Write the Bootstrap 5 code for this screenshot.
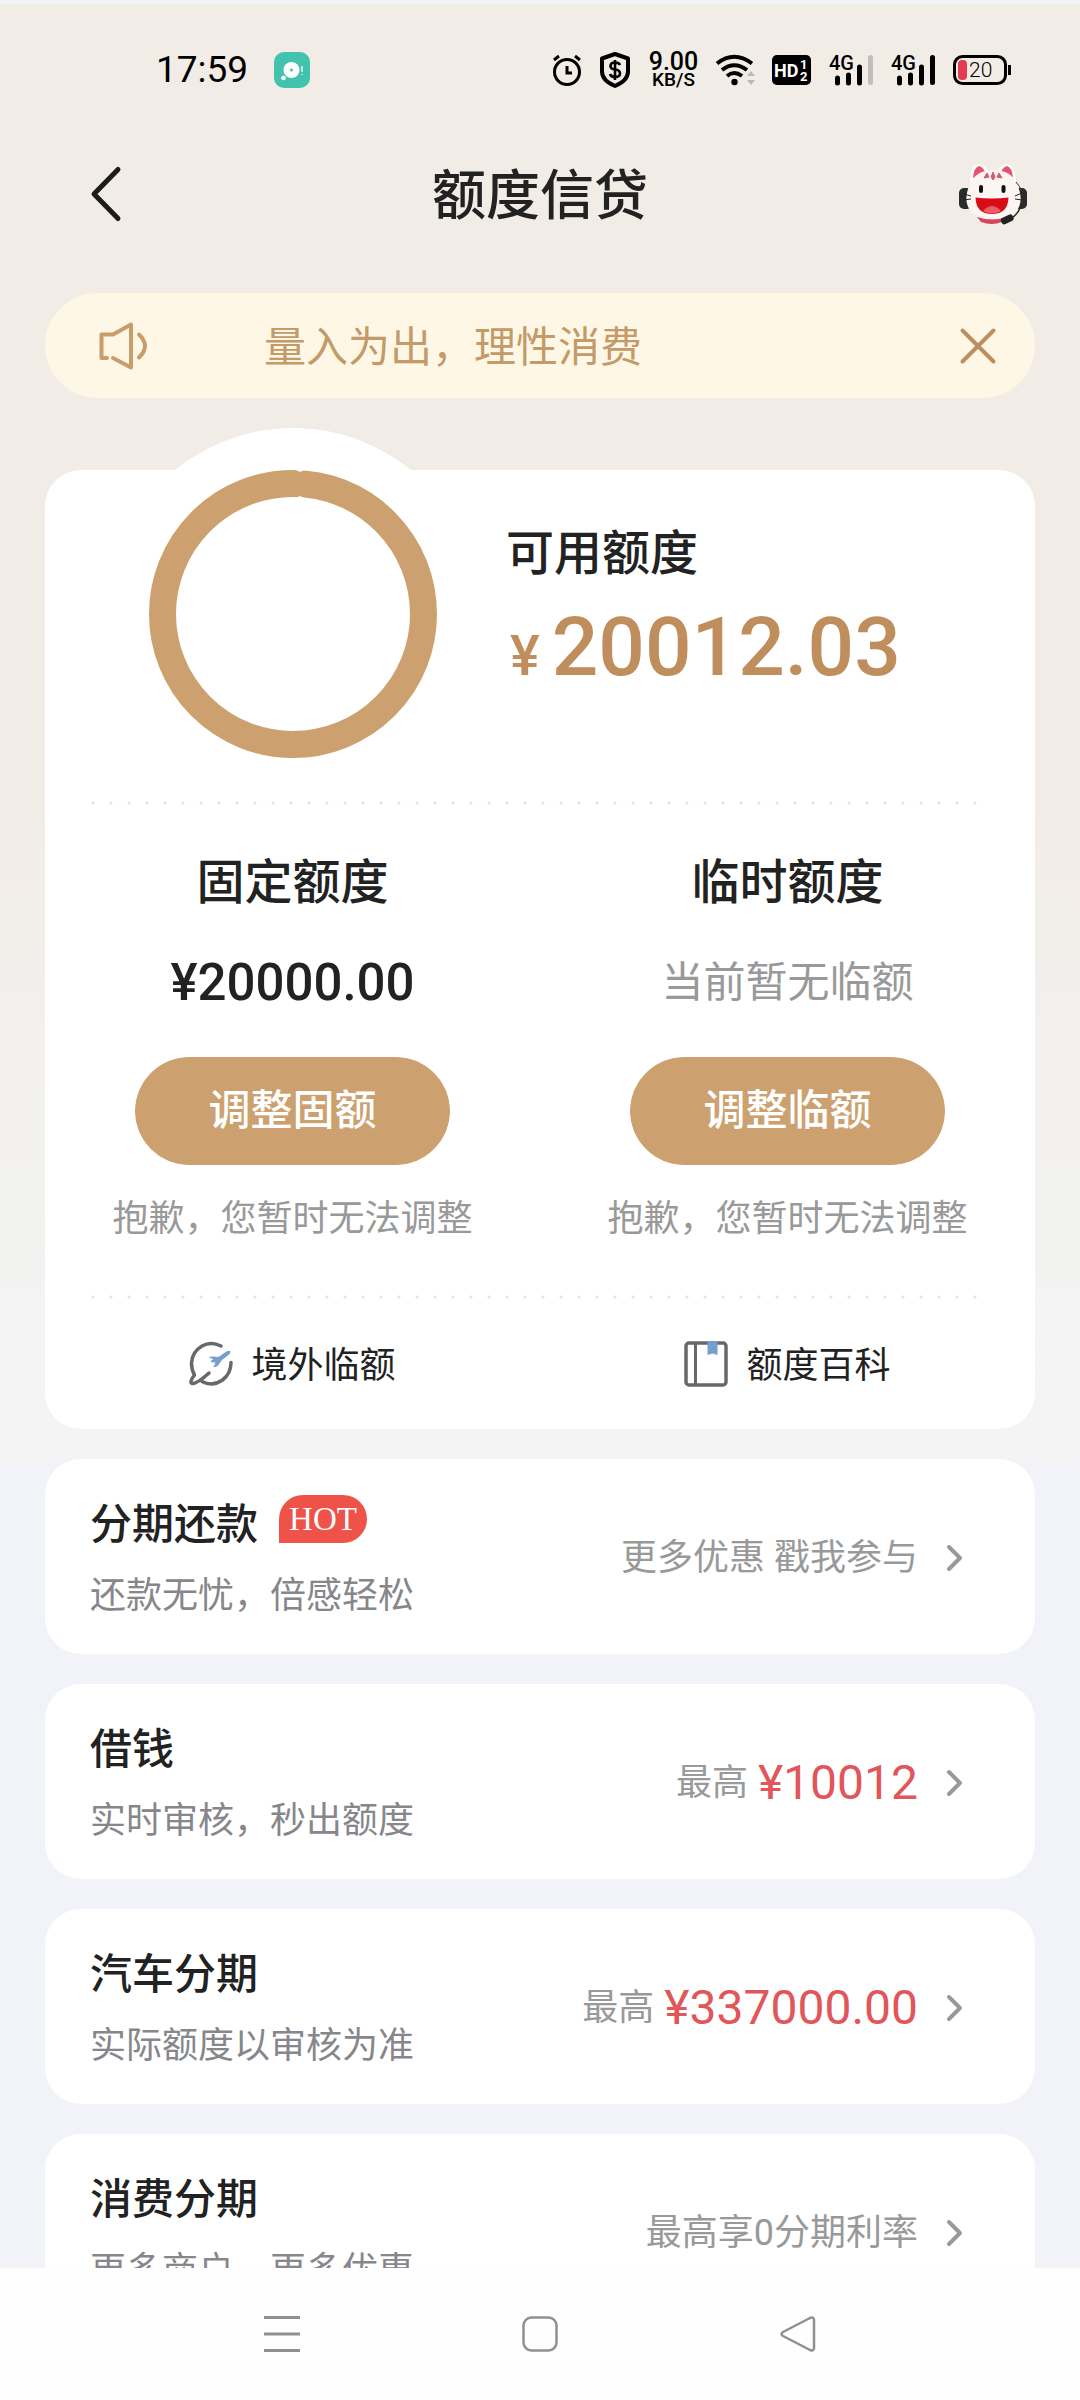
<!DOCTYPE html>
<html lang="zh-CN">
<head>
<meta charset="utf-8">
<meta name="viewport" content="width=device-width, initial-scale=1">
<title>额度信贷</title>
<link href="https://cdn.jsdelivr.net/npm/bootstrap@5.3.0/dist/css/bootstrap.min.css" rel="stylesheet">
<style>
  :root { --gold: #cca16f; --gold-text: #c39a69; --ink: #222; --muted: #999; --side: 45px; }
  body { font-family: Roboto, "Noto Sans CJK SC", sans-serif; color: var(--ink); background: #fefefe; }
  a { color: inherit; text-decoration: none; }
  svg { display: block; flex: none; overflow: visible; }

  .screen { background: linear-gradient(#f1ece6 0, #f1ece6 780px, #f3efec 1000px, #f2f2f1 1200px, #f4f4f4 1400px, #f4f4f4 1459px, #f2f3f8 1460px); }
  .status-bar { height: 136px; padding: 0 69px 0 156px; border-top: 4px solid #f3f2f7; color: #000; }
  .clock { font-size: 37px; line-height: 48px; width: 94px; }
  .status-icons { gap: 18px; }
  .net-speed { width: 49px; }
  .net-speed strong { font-size: 25px; line-height: 20px; font-weight: 500; }
  .net-speed span { font-size: 19px; line-height: 16px; font-weight: 500; }
  .hd-icon { margin-left: -3px; }

  .title-bar { height: 116px; padding: 0 53px 0 81px; }
  .title-bar h1 { font-size: 54px; line-height: 72px; font-weight: 500; padding-top: 6px; }
  .bar-start { width: 75px; }
  .bar-end { width: 103px; }

  .content { padding: 41px var(--side) 0; }
  .notice { height: 105px; padding: 0 27px 0 54px; background: #fff7e6; color: var(--gold-text); font-size: 42px; line-height: 60px; }
  .notice-text { margin-left: 117px; padding-top: 4px; }
  .btn-icon { width: 60px; height: 60px; }

  .panel { background: #fff; border-radius: 36px; }
  .limit-panel { margin-top: 72px; }
  .summary { padding: 0 0 43px 104px; }
  .ring-wrap { width: 288px; height: 288px; }
  .ring-wrap::before { content: ""; position: absolute; inset: -42px; border-radius: 50%; background: #fff; }
  .summary-text { padding-top: 54px; margin-left: 69px; }
  .heading { font-size: 48px; line-height: 60px; font-weight: 500; }
  .available { margin-top: 18px; font-size: 82px; line-height: 90px; font-weight: 500; color: #c08e5d; }
  .available small { font-size: 56px; margin: 0 12px 0 4px; }
  .dots { height: 4px; margin: 0 var(--side); background: radial-gradient(circle at 3px 2px, #e4e4e4 1px, transparent 2px) 0 0 / 18px 4px repeat-x; }

  .limits { padding: 48px 0 52px; }
  .limit-value { margin-top: 40px; line-height: 60px; font-size: 51px; font-weight: 500; }
  .limit-value.is-empty { font-size: 42px; font-weight: 400; color: var(--muted); }
  .btn-gold { --bs-btn-color: #fff; --bs-btn-bg: var(--gold); --bs-btn-border-color: var(--gold); --bs-btn-hover-color: #fff; --bs-btn-hover-bg: #c29460;
    width: 315px; height: 108px; margin-top: 44px; font-size: 42px; line-height: 60px; font-weight: 500; }
  .hint { margin-top: 30px; font-size: 36px; line-height: 48px; color: var(--muted); }
  .quick-link { height: 130px; gap: 18px; font-size: 36px; line-height: 48px; }
  .quick-link span { padding-top: 4px; }

  .product { margin-top: 30px; padding: 36px 72px 34px var(--side); }
  .product-name { gap: 21px; font-size: 42px; line-height: 60px; font-weight: 500; }
  .hot { width: 88px; height: 48px; border-radius: 24px 24px 24px 0; background: #ee5249; color: #fff; font: 33px/48px "Liberation Serif", serif; }
  .product-sub { margin-top: 17px; font-size: 36px; line-height: 48px; color: #86868b; }
  .product-side { gap: 10px; font-size: 36px; line-height: 58px; color: var(--muted); }
  .product-side svg { margin-left: 17px; }
  .price { font-size: 48px; color: #e0565a; }

  .nav-keys { height: 132px; gap: 198px; }
  .nav-keys .btn { width: 60px; height: 60px; }
</style>
</head>
<body>
<div class="d-flex flex-column vh-100">
  <div class="screen flex-grow-1 overflow-hidden">

    <div class="status-bar d-flex align-items-center justify-content-between">
      <div class="d-flex align-items-center">
        <span class="clock">17:59</span>
        <svg class="ms-4" width="36" height="36" viewBox="0 0 36 36"><rect width="36" height="36" rx="10" fill="#43c3ae"/><circle cx="17.500" cy="18" r="8" fill="#fff"/><circle cx="17.500" cy="18" r="1.500" fill="#43c3ae"/><circle cx="9.500" cy="26" r="2.300" fill="#fff"/><path d="M28 14v6M28 22v1" stroke="#b5ebe0" stroke-width="2"/></svg>
      </div>
      <div class="status-icons d-flex align-items-center">
        <svg width="28" height="32" viewBox="0 0 28 32" fill="none" stroke="#000" stroke-width="3"><circle cx="14" cy="18" r="12.500"/><path d="M14 12v7h5M1 6l5-4M27 6l-5-4"/></svg>
        <svg width="32" height="36" viewBox="0 0 32 36"><path d="M16 2l13 4.500v13q0 9-13 14.500Q3 28.500 3 19.500v-13z" fill="none" stroke="#000" stroke-width="4" stroke-linejoin="round"/><path d="M21 13q-1-2.500-5-2.500-4.500 0-4.500 3.500 0 3 4.500 3.500 5 .5 5 4t-5 3.500q-4 0-5-3M16 8v20" fill="none" stroke="#000" stroke-width="2.600"/></svg>
        <div class="net-speed d-flex flex-column align-items-center"><strong>9.00</strong><span>KB/S</span></div>
        <svg width="41" height="32" viewBox="0 0 41 32"><g fill="none" stroke="#000" stroke-width="4"><path d="M1 9.500Q18-4 36 9.500"/><path d="M6 16q12-9.500 25 0"/><path d="M11 22q7-6 15 0"/></g><circle cx="18.500" cy="28" r="3.200"/><path d="M31 22l4-5 4 5M31 26l4 5 4-5" fill="#bdb8b2"/></svg>
        <svg class="hd-icon" width="39" height="30" viewBox="0 0 39 30"><rect width="39" height="30" rx="5"/><g fill="#fff" font-family="Roboto" font-weight="700"><text x="2" y="22" font-size="18">HD</text><text x="28" y="14" font-size="13">1</text><text x="28" y="26" font-size="13">2</text></g></svg>
        <svg width="44" height="30" viewBox="0 0 44 30"><text x="0" y="15" font-family="Roboto" font-weight="500" font-size="20">4G</text><path d="M8.500 23v5M19.500 20v8M30.500 12v16" stroke="#000" stroke-width="5" stroke-linecap="round"/><path d="M41.500 2.500v25" stroke="#c3beb8" stroke-width="5" stroke-linecap="round"/></svg>
        <svg width="44" height="30" viewBox="0 0 44 30"><text x="0" y="15" font-family="Roboto" font-weight="500" font-size="20">4G</text><path d="M8.500 23v5M19.500 20v8M30.500 12v16M41.500 2.500v25" stroke="#000" stroke-width="5" stroke-linecap="round"/></svg>
        <svg width="58" height="30" viewBox="0 0 58 30"><rect x="1.500" y="1.500" width="51" height="27" rx="8" fill="none" stroke="#000" stroke-width="3"/><rect x="5" y="5" width="9" height="20" rx="4" fill="#e33b52"/><path d="M56.500 10v10" stroke="#000" stroke-width="3"/><text x="16" y="22" font-family="Roboto" font-weight="300" font-size="21">20</text></svg>
      </div>
    </div>

    <header class="title-bar d-flex align-items-center justify-content-between">
      <button type="button" class="btn p-0 border-0 bar-start" aria-label="返回"><svg width="45" height="60" viewBox="0 0 45 60" fill="none" stroke="#1d1c1a" stroke-width="5" stroke-linecap="round" stroke-linejoin="round"><path d="M37 5.500L13 30 37 54.500"/></svg></button>
      <h1 class="m-0">额度信贷</h1>
      <button type="button" class="btn p-0 border-0 bar-end" aria-label="客服">
        <svg class="ms-auto" width="69" height="61" viewBox="0 0 69 61">
          <path d="M12 18Q13 0 21 0q7 1 10 8zM58 18Q57 0 49 0q-7 1-10 8z" fill="#fff"/>
          <path d="M15 14q1-11 6-12 5 1 7 9zM55 14q-1-11-6-12-5 1-7 9z" fill="#e5546c"/>
          <rect x="1" y="24" width="13" height="21" rx="5" fill="#2c2b2b"/><rect x="56" y="24" width="13" height="21" rx="5" fill="#2c2b2b"/>
          <path d="M19 53q16 5 28 0l-3 5q-10 4-21 0z" fill="#d8455a"/>
          <path d="M35.500 6Q53 6 59 20q9 20-4 30-8 5-19.500 5T16 50Q3 40 12 20 18 6 35.500 6z" fill="#fbf6f4"/>
          <path d="M35 8l-2 5 2 3 2-3zM29 9l-3 5 5-1zM41 9l3 5-5-1z" fill="#d35a6e" stroke="#d35a6e"/>
          <rect x="21" y="21" width="4" height="8" rx="2" fill="#111"/><rect x="43.500" y="21" width="4" height="8" rx="2" fill="#111"/>
          <path d="M17.500 33.500q16 2 33 0Q50 50 34 50T17.500 33.500z" fill="#da0d17"/>
          <path d="M25 47q9-10 18 0-9 5-18 0z" fill="#ec5c66"/>
          <path d="M6 30l7 2M6 36l7-1M57 32l7-3M57 35l7 1" stroke="#222" stroke-width="1"/>
          <path d="M62 44q-3 8-12 12" fill="none" stroke="#222" stroke-width="1.500"/><rect x="43" y="52" width="13" height="7" rx="3" fill="#222" transform="rotate(-25 49 56)"/>
          <path d="M58 18q4 4 6 10" fill="none" stroke="#333"/>
        </svg>
      </button>
    </header>

    <main class="content">
      <div class="notice d-flex align-items-center rounded-pill">
        <svg width="48" height="48" viewBox="0 0 48 48" fill="none" stroke="#c99c6b" stroke-width="4" stroke-linecap="round" stroke-linejoin="round"><path d="M8 36H2.500V12.500H14L32 2.500v43L14 36"/><path d="M40 12.500q12 11.500 0 23"/></svg>
        <span class="notice-text flex-grow-1">量入为出，理性消费</span>
        <button type="button" class="btn btn-icon p-0 border-0 d-flex align-items-center justify-content-center" aria-label="关闭"><svg width="36" height="36" viewBox="0 0 36 36" stroke="#bd8f60" stroke-width="4" stroke-linecap="round"><path d="M2.500 2.500l31 31M33.500 2.500l-31 31"/></svg></button>
      </div>

      <section class="panel limit-panel">
        <div class="summary d-flex align-items-start">
          <div class="ring-wrap position-relative">
            <svg class="position-relative" width="288" height="288" viewBox="0 0 288 288"><circle cx="144" cy="144" r="130.500" fill="none" stroke="#cca16f" stroke-width="27"/><path d="M147 0l4 2 4-2zM147 28l4-2 4 2z" fill="#fff"/></svg>
          </div>
          <div class="summary-text position-relative">
            <h2 class="heading m-0">可用额度</h2>
            <div class="available"><small>¥</small>20012.03</div>
          </div>
        </div>
        <div class="dots"></div>
        <div class="limits row g-0 text-center">
          <div class="col-6">
            <h3 class="heading m-0">固定额度</h3>
            <div class="limit-value">¥20000.00</div>
            <button type="button" class="btn btn-gold rounded-pill p-0">调整固额</button>
            <div class="hint">抱歉，您暂时无法调整</div>
          </div>
          <div class="col-6">
            <h3 class="heading m-0">临时额度</h3>
            <div class="limit-value is-empty">当前暂无临额</div>
            <button type="button" class="btn btn-gold rounded-pill p-0">调整临额</button>
            <div class="hint">抱歉，您暂时无法调整</div>
          </div>
        </div>
        <div class="dots"></div>
        <div class="row g-0">
          <a href="#" class="col-6 quick-link d-flex align-items-center justify-content-center">
            <svg width="44" height="46" viewBox="0 0 44 46"><g fill="none" stroke="#686868" stroke-width="3.500" stroke-linecap="round" stroke-linejoin="round"><path d="M32 5Q22 0 13 5 3 11 2.500 22q0 7 3 12Q0 41 3 42.500 8 43 20 32"/><path d="M42 21.500q0 11-8.500 17.500-10 7-20.500 1.500"/></g><path d="M19.500 16q4-1 10 0l8-5.500q3-1.500 4 0 0 2-2 3.500L33 19l-4 5.500q-2 2-5 1.500 2-2 2.500-4.500-4 .5-5-1.500l3-1.500z" fill="#759fce"/></svg>
            <span>境外临额</span>
          </a>
          <a href="#" class="col-6 quick-link d-flex align-items-center justify-content-center">
            <svg width="44" height="46" viewBox="0 0 44 46"><rect x="2" y="2" width="40" height="42" rx="3" fill="none" stroke="#686868" stroke-width="3.500"/><path d="M11.500 2v42" stroke="#686868" stroke-width="3"/><path d="M23.500 0h10v14l-5-1.500-5 1.500z" fill="#759fce"/></svg>
            <span>额度百科</span>
          </a>
        </div>
      </section>

      <a href="#" class="panel product d-flex align-items-center justify-content-between">
        <div>
          <div class="product-name d-flex align-items-start">分期还款<span class="hot text-center">HOT</span></div>
          <div class="product-sub">还款无忧，倍感轻松</div>
        </div>
        <div class="product-side d-flex align-items-center"><span>更多优惠 戳我参与</span><svg width="18" height="30" viewBox="0 0 18 30" fill="none" stroke="#999" stroke-width="4" stroke-linecap="round" stroke-linejoin="round"><path d="M4 4l11 11L4 26"/></svg></div>
      </a>
      <a href="#" class="panel product d-flex align-items-center justify-content-between">
        <div>
          <div class="product-name">借钱</div>
          <div class="product-sub">实时审核，秒出额度</div>
        </div>
        <div class="product-side d-flex align-items-center"><span>最高</span><span class="price">¥10012</span><svg width="18" height="30" viewBox="0 0 18 30" fill="none" stroke="#999" stroke-width="4" stroke-linecap="round" stroke-linejoin="round"><path d="M4 4l11 11L4 26"/></svg></div>
      </a>
      <a href="#" class="panel product d-flex align-items-center justify-content-between">
        <div>
          <div class="product-name">汽车分期</div>
          <div class="product-sub">实际额度以审核为准</div>
        </div>
        <div class="product-side d-flex align-items-center"><span>最高</span><span class="price">¥337000.00</span><svg width="18" height="30" viewBox="0 0 18 30" fill="none" stroke="#999" stroke-width="4" stroke-linecap="round" stroke-linejoin="round"><path d="M4 4l11 11L4 26"/></svg></div>
      </a>
      <a href="#" class="panel product d-flex align-items-center justify-content-between">
        <div>
          <div class="product-name">消费分期</div>
          <div class="product-sub">更多商户，更多优惠</div>
        </div>
        <div class="product-side d-flex align-items-center"><span>最高享0分期利率</span><svg width="18" height="30" viewBox="0 0 18 30" fill="none" stroke="#999" stroke-width="4" stroke-linecap="round" stroke-linejoin="round"><path d="M4 4l11 11L4 26"/></svg></div>
      </a>
    </main>
  </div>

  <nav class="nav-keys flex-shrink-0 d-flex align-items-center justify-content-center">
    <button type="button" class="btn p-0 border-0 d-flex align-items-center justify-content-center" aria-label="菜单"><svg width="36" height="36" viewBox="0 0 36 36" stroke="#909090" stroke-width="3"><path d="M0 1.500h36M0 18h36M0 34.500h36"/></svg></button>
    <button type="button" class="btn p-0 border-0 d-flex align-items-center justify-content-center" aria-label="主屏幕"><svg width="36" height="36" viewBox="0 0 36 36"><rect x="1.500" y="1.500" width="33" height="33" rx="8" fill="none" stroke="#909090" stroke-width="2.500"/></svg></button>
    <button type="button" class="btn p-0 border-0 d-flex align-items-center justify-content-center" aria-label="返回上一页"><svg width="36" height="36" viewBox="0 0 36 36"><path d="M3 16L30 2q4-1.500 4 2v28q0 3.500-4 2L3 20q-3-2 0-4z" fill="none" stroke="#909090" stroke-width="2.500" stroke-linejoin="round"/></svg></button>
  </nav>
</div>
<script src="https://cdn.jsdelivr.net/npm/bootstrap@5.3.0/dist/js/bootstrap.bundle.min.js"></script>
</body>
</html>
